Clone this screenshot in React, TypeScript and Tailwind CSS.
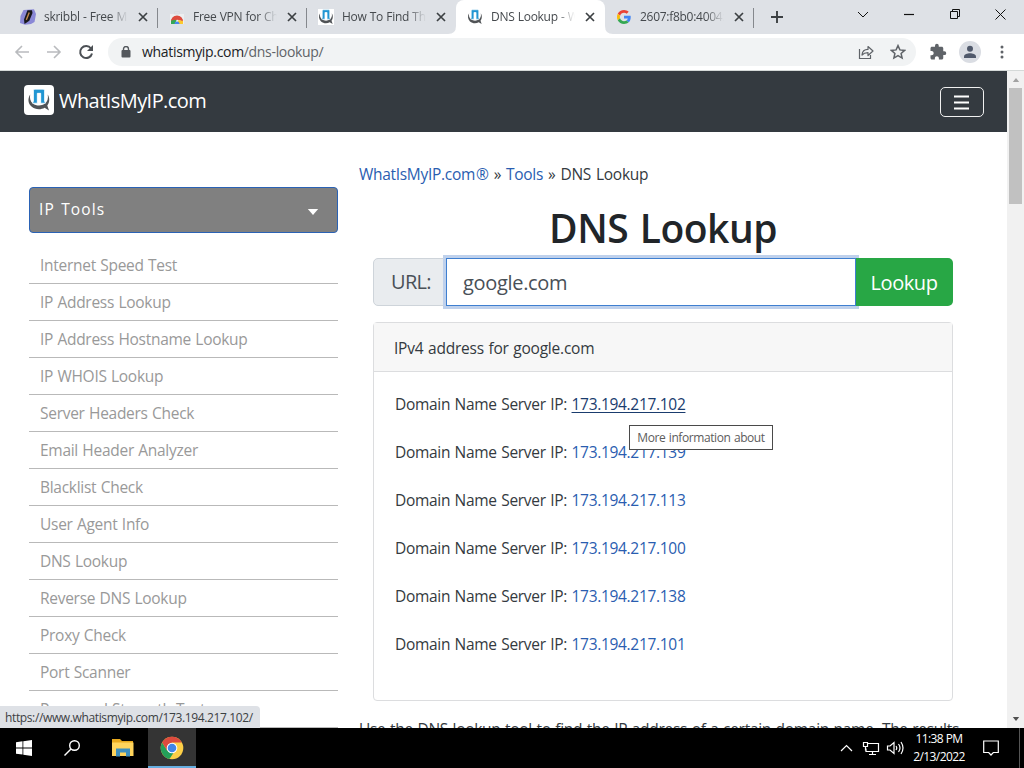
import React from "react";

const uiFont = "font-['Open_Sans','Noto_Sans',sans-serif]";

function SiteMark({ className }: { className: string }) {
  return (
    <svg viewBox="0 0 24 24" className={className}>
      <path d="M3.200 6.500C.5 10.500 1 15.500 4.500 18.600c3.600 3.200 9.200 3.500 13.100 1.200l4.400 2.700-1.700-4.900c2.500-3.300 2.600-7.700.4-11.100.8 4-.2 7.300-3 9.300-3.400 2.400-8.600 2.200-11.900-.4C3.300 13.400 2.500 10.300 3.200 6.500z" fill="#505356" />
      <path d="M6.500 2.600q0-1.400 1.400-1.400h8.200q1.400 0 1.400 1.400V13l1 2.200h-4.800V5.300h-3.400v9.900H5.500l1-2.200z" fill="#2196d3" stroke="#fff" strokeWidth="0.700" />
      <path d="M10.600 5.300h2.900v9.500h-2.900z" fill="#fff" />
    </svg>
  );
}

function PencilMark() {
  return (
    <svg viewBox="0 0 16 16" className="size-4">
      <path d="M3.500 1l10.500-.8L16 5l-1.500 8-3.500 2-6 .8L0 14l.5-7z" fill="#8a88d6" />
      <path d="M7.500 1.200l4.500 0 .5 2.800-3.200 7.800L4.500 15 4 10.500z" fill="#17171c" />
      <path d="M8.600 3.300l1.300.5-3 7.400-1.200-.6z" fill="#c58a4c" />
    </svg>
  );
}

function StoreMark() {
  return (
    <svg viewBox="0 0 16 16" className="size-4">
      <path d="M1 5h14v10H1z" fill="#eceef0" />
      <path d="M5.500 2.500h5V5h-5z" fill="none" stroke="#dadde0" />
      <path d="M2 12.500a6 6 0 0 1 12 0l-5.500-2z" fill="#de4b3e" />
      <path d="M2 12v3h4l1.500-4-4-1.300z" fill="#35a853" />
      <path d="M2.200 11.500a6 6 0 0 1 11.600 0L8 10.500z" fill="#de4b3e" />
      <path d="M14 12v3H8l1.500-4z" fill="#fbc92f" />
      <path d="M5.500 15a2.500 2.500 0 0 1 5 0z" fill="#4688ef" />
    </svg>
  );
}

function GoogleMark() {
  return (
    <svg viewBox="0 0 48 48" className="size-4 p-[1px]">
      <path fill="#EA4335" d="M24 9.500c3.540 0 6.710 1.220 9.210 3.600l6.850-6.850C35.900 2.380 30.470 0 24 0 14.620 0 6.510 5.380 2.560 13.220l7.980 6.190C12.430 13.720 17.740 9.500 24 9.500z" />
      <path fill="#4285F4" d="M46.980 24.550c0-1.570-.15-3.090-.38-4.550H24v9.020h12.940c-.58 2.960-2.260 5.480-4.780 7.180l7.730 6c4.510-4.180 7.090-10.360 7.090-17.650z" />
      <path fill="#FBBC05" d="M10.530 28.590c-.48-1.450-.76-2.990-.76-4.590s.27-3.140.76-4.590l-7.980-6.190C.92 16.460 0 20.120 0 24s.92 7.540 2.560 10.780z" />
      <path fill="#34A853" d="M24 48c6.480 0 11.930-2.130 15.890-5.810l-7.730-6c-2.150 1.450-4.920 2.300-8.160 2.300-6.260 0-11.570-4.220-13.470-9.910l-7.980 6.190C6.510 42.620 14.620 48 24 48z" />
    </svg>
  );
}

function ChromeMark() {
  return (
    <svg viewBox="0 0 24 24" className="size-6">
      <circle cx="12" cy="12" r="11.300" fill="#fdcf47" />
      <path d="M2.200 6.400L7.300 14.800 12 17.500l-3 5.400A11.300 11.300 0 0 1 2.200 6.400z" fill="#24a05a" />
      <path d="M9.500 23L15 14.500 7 14.500z" fill="#24a05a" />
      <path d="M2.200 6.400A11.300 11.300 0 0 1 21.800 6.400H12L7.300 14.800z" fill="#dc4b3e" />
      <circle cx="12" cy="12" r="5.300" fill="#fff" />
      <circle cx="12" cy="12" r="4.300" fill="#4285e8" />
    </svg>
  );
}

const tabs = [
  { title: "skribbl - Free Mul", icon: <PencilMark /> },
  { title: "Free VPN for Chro", icon: <StoreMark /> },
  { title: "How To Find The", icon: <SiteMark className="size-4 bg-white" /> },
  { title: "DNS Lookup - Wh", icon: <SiteMark className="size-4" />, active: true },
  { title: "2607:f8b0:4004:c", icon: <GoogleMark /> },
];

function TabStrip() {
  return (
    <div className="flex h-[34px] shrink-0 bg-[#dee1e6] pl-[9px] text-[12px] text-[#45494d]">
      {tabs.map((tab, i) => (
        <div
          key={tab.title}
          className={`relative flex h-[34px] w-[149px] shrink-0 items-center pl-[11px] ${tab.active ? "rounded-t-lg bg-white" : ""}`}
        >
          {tab.active && (
            <svg viewBox="0 0 165 8" className="absolute -left-2 bottom-0 h-2 w-[165px]">
              <path d="M0 8Q8 8 8 0v8zM165 8q-8 0-8-8v8z" fill="#fff" />
            </svg>
          )}
          {tab.icon}
          <span className="ml-2 w-[84px] overflow-hidden whitespace-nowrap tracking-[-0.280px] [word-spacing:0.4px] [mask-image:linear-gradient(to_right,black_78%,transparent)]">
            {tab.title}
          </span>
          <svg viewBox="0 0 10 10" className="ml-[10px] size-[10px]">
            <path d="M1 1l8 8M9 1L1 9" stroke="#3c4043" strokeWidth="1.700" />
          </svg>
          {!tab.active && i !== 2 && <i className="absolute right-0 top-2 h-5 w-px bg-[#85888d]" />}
        </div>
      ))}
      <svg viewBox="0 0 14 14" className="mt-[10px] ml-[16px] size-[14px]">
        <path d="M7 1v12M1 7h12" stroke="#3c4043" strokeWidth="1.900" />
      </svg>
      <svg viewBox="0 0 160 14" className="mt-[7px] ml-[68px] h-[14px] w-[160px]" fill="none" stroke="#111" strokeWidth="1">
        <path d="M6 5l5 5 5-5" />
        <path d="M52 7.500h10" strokeWidth="1.200" />
        <path d="M98.500 4.500h7v7h-7zM100.500 4.500v-2h7v7h-2" />
        <path d="M143.500 2.500l10 10M153.500 2.500l-10 10" />
      </svg>
    </div>
  );
}

function Toolbar() {
  return (
    <div className="flex h-[37px] shrink-0 items-center border-b border-[#d5d9d8] bg-white pb-px pl-[14px]">
      <svg viewBox="0 0 82 16" className="h-4 w-[82px]" fill="none" strokeWidth="1.600">
        <path d="M15 8H2M8 2L2 8l6 6M33 8h13M40 2l6 6-6 6" stroke="#b9bbbe" />
        <path d="M77 4.500A6 6 0 1 0 78 9.500" stroke="#4c5055" strokeWidth="2" />
        <path d="M79 1v6h-6z" fill="#4c5055" />
      </svg>
      <div className="ml-[12px] flex h-[28px] w-[808px] items-center rounded-full bg-[#f1f3f4] pl-[13px]">
        <svg viewBox="0 0 10 12" className="h-3 w-[10px]">
          <rect x="0.500" y="4" width="9" height="7.500" rx="1" fill="#54585d" />
          <path d="M2.500 5V3a2.500 2.500 0 0 1 5 0v2" fill="none" stroke="#54585d" strokeWidth="1.400" />
        </svg>
        <span className="ml-[11px] text-[14px] tracking-[-0.320px] text-[#5f6368]">
          <span className="text-[#202124]">whatismyip.com</span>/dns-lookup/
        </span>
        <svg viewBox="0 0 16 16" className="mr-[16px] ml-auto size-4" fill="none" stroke="#5f6368" strokeWidth="1.200">
          <path d="M1.500 5v9.500h11V11" />
          <path d="M4 11c.3-4 2.400-5.600 6-5.600V2.500L15 7l-5 4.500V8.600C7.500 8.600 5.500 9.200 4 11z" strokeLinejoin="round" />
        </svg>
        <svg viewBox="0 0 16 16" className="mr-[10px] size-4">
          <path d="M8 1.600l1.900 4.300 4.700.5-3.500 3.100 1 4.600L8 11.700l-4.100 2.400 1-4.600L1.400 6.400l4.700-.5z" fill="none" stroke="#5f6368" strokeWidth="1.500" />
        </svg>
      </div>
      <svg viewBox="0 0 24 24" className="ml-[13px] size-[18px]" fill="#5f6368">
        <path d="M20.500 11H19V7c0-1.100-.9-2-2-2h-4V3.500a2.500 2.500 0 0 0-5 0V5H4c-1.100 0-1.990.9-1.990 2v3.800H3.500c1.490 0 2.700 1.210 2.700 2.700s-1.210 2.700-2.700 2.700H2V20c0 1.100.9 2 2 2h3.800v-1.500c0-1.490 1.210-2.700 2.700-2.700s2.700 1.210 2.700 2.700V22H17c1.100 0 2-.9 2-2v-4h1.500a2.500 2.500 0 0 0 0-5z" />
      </svg>
      <div className="ml-[12px] flex size-[22px] items-center justify-center rounded-full bg-[#dadde3]">
        <svg viewBox="0 0 14 14" className="size-[14px]" fill="#50596b">
          <circle cx="7" cy="3.800" r="3" />
          <path d="M1 13v-1.500C1 9.500 4.500 8.300 7 8.300s6 1.200 6 3.200V13z" />
        </svg>
      </div>
      <svg viewBox="0 0 4 14" className="ml-[19px] h-[14px] w-1" fill="#5f6368">
        <circle cx="2" cy="2" r="1.500" /><circle cx="2" cy="7" r="1.500" /><circle cx="2" cy="12" r="1.500" />
      </svg>
    </div>
  );
}

const tools = [
  "Internet Speed Test", "IP Address Lookup", "IP Address Hostname Lookup", "IP WHOIS Lookup",
  "Server Headers Check", "Email Header Analyzer", "Blacklist Check", "User Agent Info",
  "DNS Lookup", "Reverse DNS Lookup", "Proxy Check", "Port Scanner", "Password Strength Test",
];

function Sidebar() {
  return (
    <aside className="w-[309px] shrink-0 pt-[55px]">
      <div className="flex h-[46px] items-center justify-between rounded-[4px] border border-[#2a62b5] bg-[#808080] pr-[18px] pl-[9px] text-[15.500px] tracking-[1.150px] text-white [word-spacing:1px]">
        IP Tools
        <svg viewBox="0 0 12 7" className="mt-[3px] h-[6px] w-3"><path d="M0 0h12L6 7z" fill="#fff" /></svg>
      </div>
      <ul className="mt-[14px]">
        {tools.map((tool) => (
          <li key={tool} className="h-[37px] border-b border-[#b9b9b9] pl-[11px] text-[15.500px] leading-[37px] tracking-[-0.280px] whitespace-nowrap text-[#999] [word-spacing:0.6px]">
            {tool}
          </li>
        ))}
      </ul>
    </aside>
  );
}

const addresses = ["173.194.217.102", "173.194.217.139", "173.194.217.113", "173.194.217.100", "173.194.217.138", "173.194.217.101"];

function Lookup() {
  return (
    <main className="ml-[21px] w-[608px] shrink-0 pt-[30px] text-[#343a40]">
      <nav className="h-6 text-[15.500px] leading-6 tracking-[-0.300px] whitespace-nowrap [word-spacing:1.3px]">
        <span className="text-[#2a5db0]">WhatIsMyIP.com<span className="ml-px">®</span></span> » <span className="text-[#2a5db0]">Tools</span> » DNS Lookup
      </nav>
      <h1 className="mt-[18px] h-[54px] text-center text-[39px] leading-[48px] font-semibold tracking-[-0.500px] text-[#212529] [word-spacing:2px]">DNS Lookup</h1>
      <div className="mr-[14px] ml-[14px] flex h-12 text-[20px] tracking-[-0.420px]">
        <div className="flex w-[73px] items-center rounded-l-[5px] border border-[#ced4da] bg-[#e9ecef] pl-[17px] tracking-[-0.700px] text-[#495057]">URL:</div>
        <div className="relative flex w-[410px] items-center border border-[#3f7fd0] bg-white pl-[16px] tracking-[-0.320px] text-[#495057] shadow-[0_0_0_3px_#bfd1ec]">
          <span className="pt-px">google.com</span>
        </div>
        <div className="relative flex w-[97px] items-center justify-center rounded-r-[5px] bg-[#28a745] pt-px pr-px text-white">Lookup</div>
      </div>
      <section className="mt-4 mr-[14px] ml-[14px] h-[379px] rounded-[4px] border border-[#dcdddf] text-[15.500px] tracking-[-0.310px] [word-spacing:0.8px]">
        <header className="h-[49px] border-b border-[#dcdddf] bg-[#f7f7f7] pl-[20px] leading-[50px] tracking-[-0.220px]">IPv4 address for google.com</header>
        <div className="relative pt-2 pl-[21px]">
          {addresses.map((ip, i) => (
            <p key={ip} className="h-12 leading-12 whitespace-nowrap">
              Domain Name Server IP:{" "}
              <span className={i === 0 ? "text-[#1a3c6e] underline underline-offset-2" : "text-[#2a5db0]"}>{ip}</span>
            </p>
          ))}
          <div className="absolute top-[53px] left-[255px] flex h-[25px] w-[144px] items-center justify-center border border-[#4a4a4a] bg-white text-[12px] tracking-[-0.420px] whitespace-nowrap text-[#5c5c5c]">
            More information about
          </div>
        </div>
      </section>
      <p className="mt-[15px] text-[15.500px] leading-[26px] tracking-[-0.290px] whitespace-nowrap [word-spacing:0.8px]">
        Use the DNS lookup tool to find the IP address of a certain domain name. The results
      </p>
    </main>
  );
}

function Taskbar() {
  return (
    <footer className="flex h-10 shrink-0 items-center bg-black text-white">
      <svg viewBox="0 0 16 16" className="ml-4 size-4" fill="#fff">
        <path d="M0 2.200l6.500-.9v6.200H0zM7.300 1.200L16 0v7.500H7.300zM0 8.400h6.500v6.200L0 13.700zM7.300 8.400H16V16l-8.700-1.200z" />
      </svg>
      <svg viewBox="0 0 16 16" className="ml-[32px] size-4" fill="none" stroke="#fff" strokeWidth="1.400">
        <circle cx="10.500" cy="5.500" r="4.800" /><path d="M7 9L.5 15.500" />
      </svg>
      <svg viewBox="0 0 22 18" className="ml-[32px] h-[18px] w-[22px]">
        <path d="M0 0h8l2 2h11v15H0z" fill="#e8a91e" />
        <path d="M0 3.500h21.500v13.500H0z" fill="#ffd45c" />
        <path d="M4 9.500h14v8h-4v-4H8v4H4z" fill="#3f8fbd" />
      </svg>
      <div className="ml-[14px] flex h-10 w-12 items-center justify-center border-b-2 border-[#66aee0] bg-[#343434] pt-px">
        <ChromeMark />
      </div>
      <svg viewBox="0 0 64 16" className="ml-auto h-4 w-16" fill="none" stroke="#fff" strokeWidth="1.200">
        <path d="M1 11l5.500-5.500L12 11" />
        <path d="M28 3.500h10.500v8H26v-3M32.500 11.500v3M29 14.500h7M23.500 2.500h4v4h-4zM25.500 6.500v4" />
        <path d="M47.500 6h2.500l4-3.500v11L50 10h-2.500zM56 6q1.500 2 0 4M58.500 4q3 4 0 8M61 2q4 6 0 12" />
      </svg>
      <div className="ml-[4px] w-[62px] text-center text-[12px] leading-[18px] tracking-[-0.600px] whitespace-nowrap">
        <div>11:38 PM</div><div>2/13/2022</div>
      </div>
      <svg viewBox="0 0 16 16" className="mr-[20px] ml-[13px] size-4" fill="none" stroke="#fff" strokeWidth="1.200">
        <path d="M.7 1h14.600v11.500h-5L8 15l-2.300-2.500h-5z" />
      </svg>
      <i className="mr-1 h-10 w-px bg-[#555]" />
    </footer>
  );
}

export default function App() {
  return (
    <div className={`flex h-[768px] w-[1024px] flex-col overflow-hidden bg-white ${uiFont}`}>
      <TabStrip />
      <Toolbar />
      <div className="relative flex min-h-0 flex-1">
        <div className="w-[1007px] overflow-hidden">
          <div className="flex h-[61px] items-center bg-[#343a40] pr-[23px] pl-6 text-white">
            <div className="mb-[3px] flex size-[30px] items-center justify-center rounded-[4px] bg-white">
              <SiteMark className="size-[24px]" />
            </div>
            <span className="mb-[2px] ml-[5px] text-[20px] tracking-[-0.560px]">WhatIsMyIP.com</span>
            <div className="ml-auto flex h-[30px] w-[44px] items-center justify-center rounded-[5px] border border-[#f0f0f0]">
              <svg viewBox="0 0 16 16" className="size-4"><path d="M0 2.500h15M0 8.500h15M0 14.500h15" stroke="#fff" strokeWidth="2" /></svg>
            </div>
          </div>
          <div className="flex pl-[29px]">
            <Sidebar />
            <Lookup />
          </div>
        </div>
        <div className="flex w-[17px] flex-col items-center bg-[#f1f1f1]">
          <svg viewBox="0 0 8 5" className="mt-[7px] h-[4px] w-2"><path d="M0 5l4-5 4 5z" fill="#a3a3a3" /></svg>
          <div className="mt-[6px] h-[116px] w-[13px] bg-[#c1c1c1]" />
          <svg viewBox="0 0 8 5" className="mt-auto mb-[7px] h-[4px] w-2"><path d="M0 0l4 5 4-5z" fill="#505050" /></svg>
        </div>
        <div className="absolute bottom-0 left-0 flex h-[22px] w-[260px] items-center rounded-tr-[4px] bg-[#dee1e6] pt-px pl-[5px] text-[12px] tracking-[-0.370px] text-[#3c4043]">
          https://www.whatismyip.com/173.194.217.102/
        </div>
      </div>
      <Taskbar />
    </div>
  );
}
